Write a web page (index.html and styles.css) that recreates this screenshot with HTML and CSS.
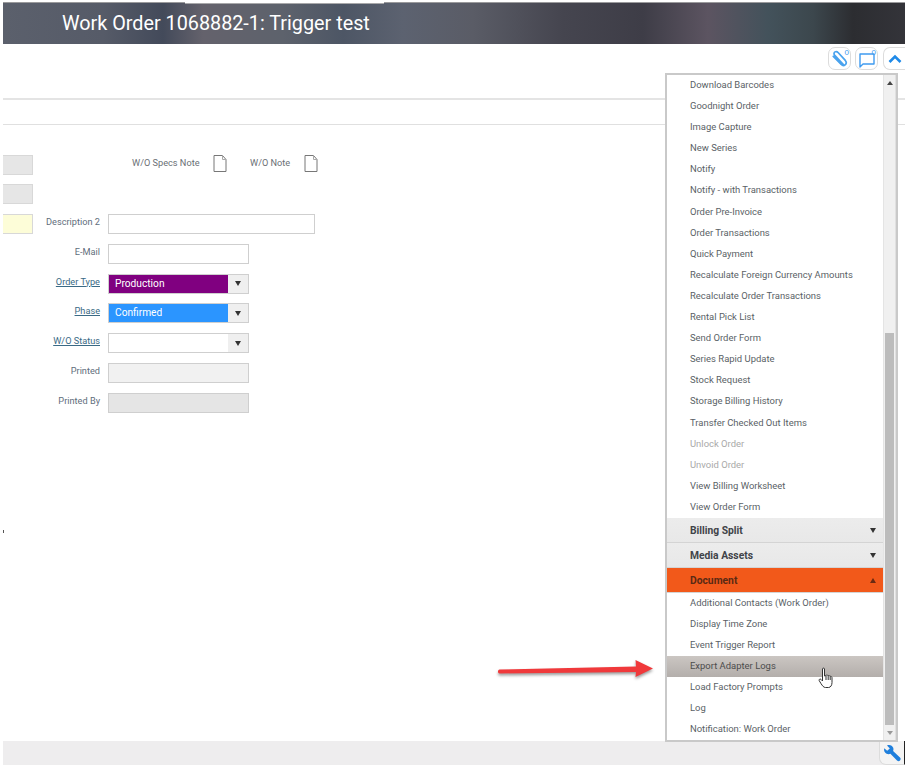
FILE: index.html
```html
<!DOCTYPE html>
<html lang="en">
<head>
  <meta charset="UTF-8">
  <title>Work Order 1068882-1</title>
  <link rel="stylesheet" href="styles.css">
</head>
<body>
  <div class="page">
    <header class="titlebar">
      <h1>Work Order 1068882-1: Trigger test</h1>
    </header>

    <div class="toolbar">
      <button class="tool-btn">
        <svg class="clip" width="18" height="18" viewBox="0 0 18 18" fill="none" stroke="#4aa3ee" stroke-width="1.7" stroke-linecap="round">
          <path d="M13.4 14.6 L4.8 5.4 C3.4 3.8 4.2 2.4 5 1.9 C6 1.3 7.2 1.5 8.3 2.7 L15.3 10.4 C16.7 12.2 16.2 14 15.1 14.9 C13.9 16 12.3 15.6 11 14.2 L3.3 6.4"/>
          <path d="M11.4 13.9 L6.4 8.5"/>
        </svg>
        <span class="count">0</span>
      </button>
      <button class="tool-btn">
        <svg width="20" height="20" viewBox="0 0 20 20" fill="none" stroke="#3f9bf0" stroke-width="1.4" stroke-linejoin="round">
          <path d="M3 5 H17 V15 H6 L3 18 Z"/>
        </svg>
        <span class="count">0</span>
      </button>
      <button class="tool-btn tool-btn-last">
        <svg width="14" height="10" viewBox="0 0 14 10" fill="none" stroke="#1f8ae8" stroke-width="2.6">
          <path d="M1.5 8 L7 2.5 L12.5 8"/>
        </svg>
      </button>
    </div>

    <div class="tab-rule"></div>

    <!-- Form -->
    <section class="form-area">
      <div class="stubs">
        <div class="stub"></div>
        <div class="stub"></div>
        <div class="stub stub-yellow"></div>
      </div>
      <div class="fields">
        <div class="notes-row">
          <span class="note-label">W/O Specs Note</span>
          <svg class="doc-icon" width="14" height="17" viewBox="0 0 14 17" fill="#fff" stroke="#777" stroke-width="1">
            <path d="M1 .5 H9.5 L13 4.5 V16.5 H1 Z"/>
            <path d="M9.5 .5 V4.5 H13" fill="none" stroke="#aaa"/>
          </svg>
          <span class="note-label note-label-2">W/O Note</span>
          <svg class="doc-icon" width="14" height="17" viewBox="0 0 14 17" fill="#fff" stroke="#777" stroke-width="1">
            <path d="M1 .5 H9.5 L13 4.5 V16.5 H1 Z"/>
            <path d="M9.5 .5 V4.5 H13" fill="none" stroke="#aaa"/>
          </svg>
        </div>
        <div class="row">
          <label>Description 2</label>
          <div class="box box-wide"></div>
        </div>
        <div class="row">
          <label>E-Mail</label>
          <div class="box"></div>
        </div>
        <div class="row">
          <label class="link">Order Type</label>
          <div class="box select">
            <span class="select-value purple">Production</span>
            <span class="select-btn"><i class="caret-down"></i></span>
          </div>
        </div>
        <div class="row">
          <label class="link">Phase</label>
          <div class="box select">
            <span class="select-value blue">Confirmed</span>
            <span class="select-btn"><i class="caret-down"></i></span>
          </div>
        </div>
        <div class="row">
          <label class="link">W/O Status</label>
          <div class="box select">
            <span class="select-value"></span>
            <span class="select-btn"><i class="caret-down"></i></span>
          </div>
        </div>
        <div class="row">
          <label>Printed</label>
          <div class="box box-light"></div>
        </div>
        <div class="row">
          <label>Printed By</label>
          <div class="box box-grey"></div>
        </div>
      </div>
    </section>

    <footer class="statusbar">
      <button class="wrench-btn">
        <svg width="18" height="18" viewBox="0 0 18 18">
          <path fill="#1f7fdc" d="M1.2 4.2 L4.2 6.8 L6.8 4.6 L4 1.4 C6.4 .2 9.4 1.2 10.2 3.8 C10.6 5 10.5 6 10.1 7 L17 13.6 C18 14.6 17.8 15.8 17 16.6 C16.2 17.4 15 17.4 14 16.6 L7.4 9.8 C6.2 10.3 4.8 10.3 3.6 9.7 C1.6 8.8 .6 6.4 1.2 4.2 Z"/>
        </svg>
      </button>
    </footer>
  </div>

  <i class="edge-mark"></i>

  <!-- Actions menu, lies over the page -->
  <div class="menu">
    <div class="menu-list">
      <a class="item">Download Barcodes</a>
      <a class="item">Goodnight Order</a>
      <a class="item">Image Capture</a>
      <a class="item">New Series</a>
      <a class="item">Notify</a>
      <a class="item">Notify - with Transactions</a>
      <a class="item">Order Pre-Invoice</a>
      <a class="item">Order Transactions</a>
      <a class="item">Quick Payment</a>
      <a class="item">Recalculate Foreign Currency Amounts</a>
      <a class="item">Recalculate Order Transactions</a>
      <a class="item">Rental Pick List</a>
      <a class="item">Send Order Form</a>
      <a class="item">Series Rapid Update</a>
      <a class="item">Stock Request</a>
      <a class="item">Storage Billing History</a>
      <a class="item">Transfer Checked Out Items</a>
      <a class="item disabled">Unlock Order</a>
      <a class="item disabled">Unvoid Order</a>
      <a class="item">View Billing Worksheet</a>
      <a class="item">View Order Form</a>
      <div class="section">Billing Split<i class="caret-down"></i></div>
      <div class="section">Media Assets<i class="caret-down"></i></div>
      <div class="section section-active">Document<i class="caret-up"></i></div>
      <a class="item">Additional Contacts (Work Order)</a>
      <a class="item">Display Time Zone</a>
      <a class="item">Event Trigger Report</a>
      <a class="item hover">Export Adapter Logs</a>
      <a class="item">Load Factory Prompts</a>
      <a class="item">Log</a>
      <a class="item">Notification: Work Order</a>
    </div>
    <div class="scrollbar">
      <i class="scroll-up"></i>
      <div class="scroll-thumb"></div>
      <i class="scroll-down"></i>
    </div>
  </div>

  <!-- Annotation arrow -->
  <svg class="arrow" width="170" height="30" viewBox="0 0 170 30">
    <path d="M2.5 14.5 L139 11.5 L138.5 5 L156 13.5 L138.5 22 L139 17 L2.5 18.5 C.5 18.5 .5 14.5 2.5 14.5 Z" fill="#f0393b"/>
  </svg>

  <!-- Hand cursor -->
  <svg class="hand" width="16" height="22" viewBox="0 0 16 22" fill="#fff" stroke="#333" stroke-width="1" stroke-linejoin="round">
    <path d="M4.5 2 C4.5 .8 6.5 .8 6.5 2 V9 L8 8.6 C8.6 7.8 9.8 8 10 8.8 C10.6 8.2 11.8 8.6 12 9.4 C12.8 9 14 9.6 14 10.6 V15.5 C14 18 12.8 20.5 10.5 20.5 H7.5 C5.5 20.5 4.5 18.8 3 16.6 L1.2 13.6 C.6 12.6 2 11.4 3 12.4 L4.5 14 Z"/>
    <path d="M8 9 V13 M10.2 9 V13 M12.2 9.6 V13" fill="none"/>
  </svg>
</body>
</html>
```

FILE: styles.css
```css
html, body {
  margin: 0;
  padding: 0;
}
body {
  width: 905px;
  height: 765px;
  position: relative;
  overflow: hidden;
  background-color: #fff;
  font-family: Roboto, "Liberation Sans", Arial, sans-serif;
  font-size: 9.2px;
  color: #5d6670;
}
.page {
  height: 765px;
  padding: 2px 0 0 3px;
  box-sizing: border-box;
  display: flex;
  flex-direction: column;
}

/* Title */
.titlebar {
  height: 42px;
  flex: none;
  position: relative;
  box-sizing: border-box;
  border-top: 1px solid #9a9a9c;
  display: flex;
  align-items: center;
  padding-left: 59px;
  background: linear-gradient(90deg, #5b606c 0, #565b68 100px, #434a5a 160px, #64626c 200px, #5d626c 280px, #4d5665 340px, #5c6270 400px, #5a5c66 470px, #45454f 560px, #3e3d47 640px, #5c5461 705px, #43525b 765px, #3c474d 810px, #2c2d31 850px, #34343a 905px);
}
.titlebar::before {
  content: "";
  position: absolute;
  left: 182px;
  top: -1px;
  width: 199px;
  height: 1px;
  background-color: #fff;
  border-bottom: 1px solid #a8a8aa;
}
.titlebar h1 {
  margin: 0;
  font-size: 19.8px;
  font-weight: 400;
  color: #fff;
}

/* Buttons under the title */
.toolbar {
  height: 54px;
  flex: none;
  display: flex;
  justify-content: flex-end;
  align-items: flex-start;
  gap: 4px;
  padding-top: 3px;
  box-sizing: border-box;
}
.tool-btn {
  width: 23px;
  height: 23px;
  padding: 0;
  border: 1px solid #dcdcdc;
  border-radius: 7px;
  background-color: #fff;
  display: flex;
  align-items: center;
  justify-content: center;
  position: relative;
}
.tool-btn-last {
  border-radius: 7px 0 0 7px;
  border-right: 0;
  width: 22px;
  margin-left: 1px;
}
.clip {
  margin-left: -2px;
}
.count {
  position: absolute;
  top: 0;
  right: 1px;
  font-size: 8px;
  line-height: 9px;
  color: #3f9bf0;
}
.tab-rule {
  height: 24px;
  flex: none;
  border-top: 2px solid #e4e4e4;
  border-bottom: 1px solid #e0e0e0;
}

/* Form */
.form-area {
  flex: 1;
  display: flex;
  padding-top: 30px;
}
.stubs {
  width: 30px;
  display: flex;
  flex-direction: column;
  gap: 9px;
}
.stub {
  height: 20px;
  background-color: #e6e6e6;
  border: 1px solid #d8d8d8;
  border-left: 0;
  box-sizing: border-box;
}
.stub-yellow {
  margin-top: 1px;
  background-color: #fdfdd8;
}
.fields {
  display: flex;
  flex-direction: column;
  gap: 9.8px;
}
.notes-row {
  height: 50px;
  margin-top: -1px;
  margin-bottom: 0.2px;
  margin-left: 99px;
  display: flex;
  align-items: flex-start;
  padding-top: 1px;
  box-sizing: border-box;
}
.note-label {
  line-height: 15px;
  color: #6a6f75;
  width: 81px;
}
.note-label-2 {
  width: 54px;
  margin-left: 23px;
}
.doc-icon {
  flex: none;
}
.row {
  display: flex;
  height: 20px;
  gap: 8px;
}
.row label {
  width: 67px;
  text-align: right;
  line-height: 16px;
  color: #5f6e7c;
  white-space: nowrap;
}
.row label.link {
  color: #3a6a85;
  text-decoration: underline;
}
.box {
  width: 141px;
  height: 20px;
  box-sizing: border-box;
  border: 1px solid #cfcfcf;
  background-color: #fff;
}
.box-wide {
  width: 207px;
}
.box-light {
  background-color: #f1f1f1;
}
.box-grey {
  background-color: #e5e5e5;
}
.select {
  display: flex;
}
.select-value {
  flex: 1;
  padding-left: 6px;
  font-size: 10.2px;
  line-height: 18px;
  color: #fff;
}
.purple {
  background-color: #800080;
}
.blue {
  background-color: #2b95ff;
}
.select-btn {
  width: 20px;
  background-color: #efefef;
  display: flex;
  align-items: center;
  justify-content: center;
}
.caret-down {
  width: 0;
  height: 0;
  border-left: 3.5px solid transparent;
  border-right: 3.5px solid transparent;
  border-top: 5px solid #333;
}
.caret-up {
  width: 0;
  height: 0;
  border-left: 3.5px solid transparent;
  border-right: 3.5px solid transparent;
  border-bottom: 5px solid #6b2a12;
}

/* Bottom bar */
.statusbar {
  height: 24px;
  flex: none;
  background-color: #eeedee;
  display: flex;
  justify-content: flex-end;
}
.wrench-btn {
  width: 26px;
  height: 24px;
  padding: 0;
  background-color: #f4f4f4;
  border: 1px solid #dcdcdc;
  border-top: 0;
  border-right: 1px solid #222;
  border-radius: 0 0 0 7px;
  display: flex;
  align-items: center;
  justify-content: center;
}

/* Small tick on the left edge */
.edge-mark {
  position: absolute;
  left: 3px;
  top: 530px;
  width: 1px;
  height: 3px;
  background-color: #555;
}

/* Menu */
.menu {
  position: absolute;
  left: 665px;
  top: 73px;
  width: 233px;
  height: 669px;
  box-sizing: border-box;
  border: 2px solid #c9c9c9;
  background-color: #fff;
  display: flex;
}
.menu-list {
  width: 216px;
  flex: none;
}
.item {
  display: block;
  height: 21.1px;
  line-height: 20px;
  padding-left: 23px;
  font-size: 9.45px;
  white-space: nowrap;
  color: #5a5f66;
}
.item.disabled {
  color: #a9a9a9;
}
.item.hover {
  background: linear-gradient(#cbc6c2, #b3aeab);
  color: #4c4c4c;
}
.section {
  height: 24.9px;
  box-sizing: border-box;
  border-bottom: 1px solid #d4d4d4;
  padding: 1px 7px 0 23px;
  background: linear-gradient(#ececec, #e8e8e8);
  font-size: 10.3px;
  font-weight: 700;
  color: #3f4348;
  display: flex;
  align-items: center;
  justify-content: space-between;
}
.section-active {
  background: #f2591a;
  color: #5a2a14;
}
.scrollbar {
  flex: 1;
  background-color: #f0f0f0;
  display: flex;
  flex-direction: column;
  align-items: center;
  position: relative;
  border-left: 1px solid #e4e4e4;
  border-right: 1px solid #e0e0e0;
}
.scroll-thumb {
  position: absolute;
  top: 258px;
  bottom: 15px;
  left: 1px;
  right: 1px;
  background-color: #bcbcbc;
}
.scroll-up {
  width: 0;
  height: 0;
  margin-top: 6px;
  border-left: 3.5px solid transparent;
  border-right: 3.5px solid transparent;
  border-bottom: 4px solid #444;
}
.scroll-down {
  width: 0;
  height: 0;
  margin-top: auto;
  margin-bottom: 5px;
  border-left: 3.5px solid transparent;
  border-right: 3.5px solid transparent;
  border-top: 4px solid #999;
}

/* Annotation and cursor over the page */
.arrow {
  position: absolute;
  left: 497px;
  top: 655px;
  filter: drop-shadow(0 2px 1.5px rgba(0, 0, 0, .4));
}
.hand {
  position: absolute;
  left: 818px;
  top: 667px;
}
```
